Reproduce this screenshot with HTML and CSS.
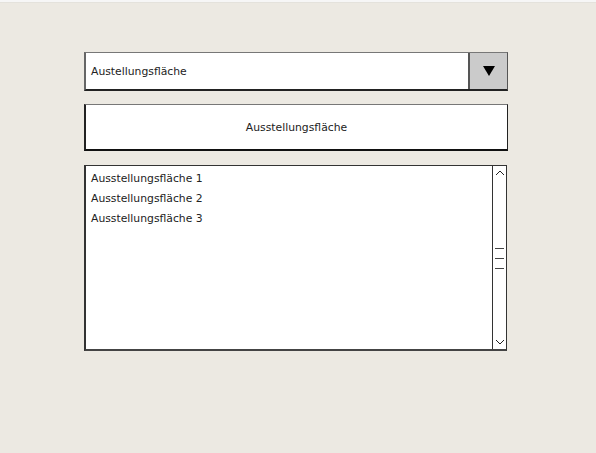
FILE: index.html
```html
<!DOCTYPE html>
<html lang="de">
<head>
<meta charset="utf-8">
<title>Ausstellungsfläche</title>
<link rel="stylesheet" href="styles.css">
</head>
<body>
<div class="topstrip"></div>
<main class="stage">
  <div class="combo">
    <div class="combo-text">Austellungsfläche</div>
    <div class="combo-btn">
      <svg width="14" height="12" viewBox="0 0 14 12"><polygon points="1,1 13,1 7,11" fill="#000"/></svg>
    </div>
  </div>
  <div class="button">Ausstellungsfläche</div>
  <div class="list">
    <ul class="items">
      <li>Ausstellungsfläche 1</li>
      <li>Ausstellungsfläche 2</li>
      <li>Ausstellungsfläche 3</li>
    </ul>
    <div class="scrollbar">
      <svg class="arrow" width="10" height="8" viewBox="0 0 10 8"><polyline points="1,6 5,2 9,6" fill="none" stroke="#222" stroke-width="1"/></svg>
      <div class="grip"><span></span><span></span><span></span></div>
      <svg class="arrow" width="10" height="8" viewBox="0 0 10 8"><polyline points="1,2 5,6 9,2" fill="none" stroke="#222" stroke-width="1"/></svg>
    </div>
  </div>
</main>
</body>
</html>
```
FILE: styles.css
```css
html, body {
  margin: 0;
  padding: 0;
}
body {
  background: #ece9e2;
  width: 596px;
  height: 453px;
  overflow: hidden;
  font-family: "DejaVu Sans", "Liberation Sans", sans-serif;
  font-size: 10.8px;
  color: #222;
}
.topstrip {
  height: 2px;
  background: #f6f6f6;
  border-bottom: 1px solid #e4e2dc;
}
.stage {
  padding: 49px 0 0 84px;
  width: 424px;
  display: flex;
  flex-direction: column;
}
.combo {
  height: 39px;
  box-sizing: border-box;
  display: flex;
  border: 1px solid #555;
  border-top-color: #777;
  border-bottom: 2px solid #222;
  border-left: 2px solid #666;
  background: #fff;
}
.combo-text {
  flex: 1;
  display: flex;
  align-items: center;
  padding: 1px 0 0 5px;
}
.combo-btn {
  width: 37px;
  background: #cbcbcb;
  border-left: 2px solid #555;
  display: flex;
  align-items: center;
  justify-content: center;
}
.button {
  margin-top: 13px;
  height: 47px;
  box-sizing: border-box;
  background: #fff;
  border: 1px solid #222;
  border-top-color: #777;
  border-left: 2px solid #222;
  border-bottom: 2px solid #111;
  display: flex;
  align-items: center;
  justify-content: center;
}
.list {
  margin-top: 14px;
  width: 423px;
  height: 186px;
  box-sizing: border-box;
  background: #fff;
  border: 1px solid #333;
  border-left: 2px solid #333;
  border-bottom: 2px solid #444;
  display: flex;
}
.items {
  flex: 1;
  list-style: none;
  margin: 0;
  padding: 3px 0 0 5px;
}
.items li {
  height: 20px;
  line-height: 20px;
}
.scrollbar {
  width: 13px;
  border-left: 1px solid #333;
  display: flex;
  flex-direction: column;
  align-items: center;
  justify-content: space-between;
  padding: 3px 0 3px;
}
.grip {
  display: flex;
  flex-direction: column;
  gap: 9px;
  margin-top: 1px;
}
.grip span {
  display: block;
  width: 9px;
  height: 1px;
  background: #444;
}
```
